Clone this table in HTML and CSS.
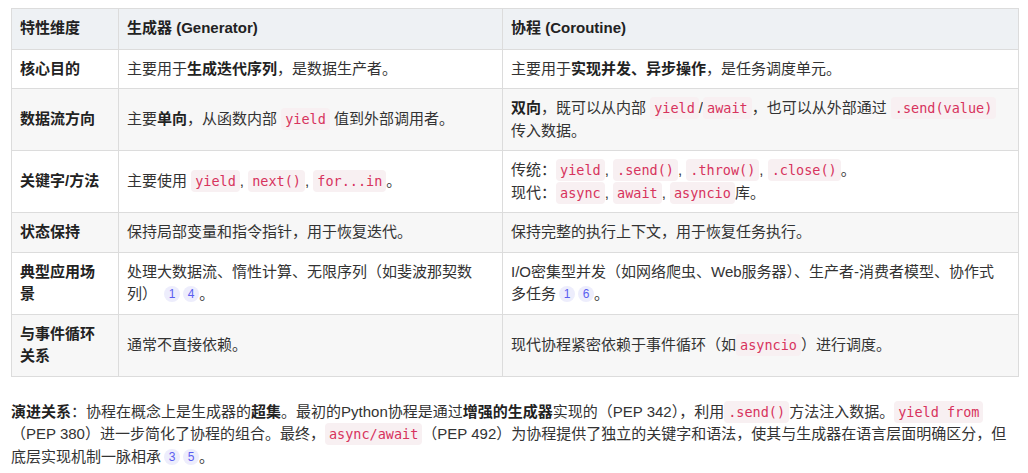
FILE: index.html
```html
<!DOCTYPE html>
<html lang="zh-CN">
<head>
<meta charset="utf-8">
<title>生成器与协程</title>
<link rel="stylesheet" href="styles.css">
</head>
<body>
<div class="page">
  <table class="cmp">
    <colgroup>
      <col class="c1"><col class="c2"><col class="c3">
    </colgroup>
    <thead>
      <tr><th>特性维度</th><th>生成器 (Generator)</th><th>协程 (Coroutine)</th></tr>
    </thead>
    <tbody>
      <tr>
        <td class="k">核心目的</td>
        <td>主要用于<b>生成迭代序列</b>，是数据生产者。</td>
        <td>主要用于<b>实现并发、异步操作</b>，是任务调度单元。</td>
      </tr>
      <tr class="alt">
        <td class="k">数据流方向</td>
        <td>主要<b>单向</b>，从函数内部 <code>yield</code> 值到外部调用者。</td>
        <td><b>双向</b>，既可以从内部 <code>yield</code>/<code>await</code>，也可以从外部通过 <code>.send(value)</code> 传入数据。</td>
      </tr>
      <tr>
        <td class="k">关键字/方法</td>
        <td>主要使用 <code>yield</code>, <code>next()</code>, <code>for...in</code>。</td>
        <td>传统：<code>yield</code>, <code>.send()</code>, <code>.throw()</code>, <code>.close()</code>。<br>现代：<code>async</code>, <code>await</code>, <code>asyncio</code>库。</td>
      </tr>
      <tr class="alt">
        <td class="k">状态保持</td>
        <td>保持局部变量和指令指针，用于恢复迭代。</td>
        <td>保持完整的执行上下文，用于恢复任务执行。</td>
      </tr>
      <tr>
        <td class="k">典型应用场景</td>
        <td>处理大数据流、惰性计算、无限序列（如斐波那契数列） <span class="cite">1</span><span class="cite">4</span>。</td>
        <td>I/O密集型并发（如网络爬虫、Web服务器）、生产者-消费者模型、协作式多任务<span class="cite">1</span><span class="cite">6</span>。</td>
      </tr>
      <tr class="alt">
        <td class="k">与事件循环关系</td>
        <td>通常不直接依赖。</td>
        <td>现代协程紧密依赖于事件循环（如<code>asyncio</code>）进行调度。</td>
      </tr>
    </tbody>
  </table>
  <p class="note"><b>演进关系</b>：协程在概念上是生成器的<b>超集</b>。最初的Python协程是通过<b>增强的生成器</b>实现的（PEP 342），利用<code>.send()</code>方法注入数据。<code>yield from</code>（PEP 380）进一步简化了协程的组合。最终，<code>async/await</code>（PEP 492）为协程提供了独立的关键字和语法，使其与生成器在语言层面明确区分，但底层实现机制一脉相承<span class="cite">3</span><span class="cite">5</span>。</p>
</div>
</body>
</html>
```

FILE: styles.css
```css
html, body {
  margin: 0;
  padding: 0;
  background: #ffffff;
}

body {
  font-family: "Liberation Sans", "Noto Sans CJK SC", sans-serif;
  font-size: 15px;
  line-height: 1.5;
  color: #333333;
}

.page {
  padding: 8px 10px 0 11px;
}

.cmp {
  width: 1007px;
  table-layout: fixed;
  border-collapse: collapse;
}

.cmp .c1 { width: 107px; }
.cmp .c2 { width: 384px; }
.cmp .c3 { width: 516px; }

.cmp th,
.cmp td {
  border: 1px solid #dcdcdc;
  padding: 8px 9px 8px 8px;
  text-align: left;
  vertical-align: middle;
}

.cmp th {
  background: #eef1f4;
  font-weight: 700;
  color: #222222;
  padding-top: 8px;
  padding-bottom: 9px;
}

.cmp td.k {
  font-weight: 700;
  color: #222222;
}

.cmp b {
  font-weight: 700;
  color: #222222;
}

.cmp tr.alt td {
  background: #f7f7f7;
}

code {
  font-family: "DejaVu Sans Mono", "Liberation Mono", monospace;
  font-size: 13.5px;
  color: #d7335d;
  background: #f8f0f2;
  border-radius: 4px;
  padding: 3px 4px;
}

.cite {
  display: inline-block;
  width: 16px;
  height: 16px;
  line-height: 16px;
  margin-left: 3px;
  border-radius: 50%;
  background: #ededfc;
  color: #5b5ef0;
  font-size: 12px;
  text-align: center;
  vertical-align: 1px;
}

.note {
  margin: 24px 0 0 0;
  width: 1003px;
}

.note b {
  font-weight: 700;
  color: #222222;
}
```
